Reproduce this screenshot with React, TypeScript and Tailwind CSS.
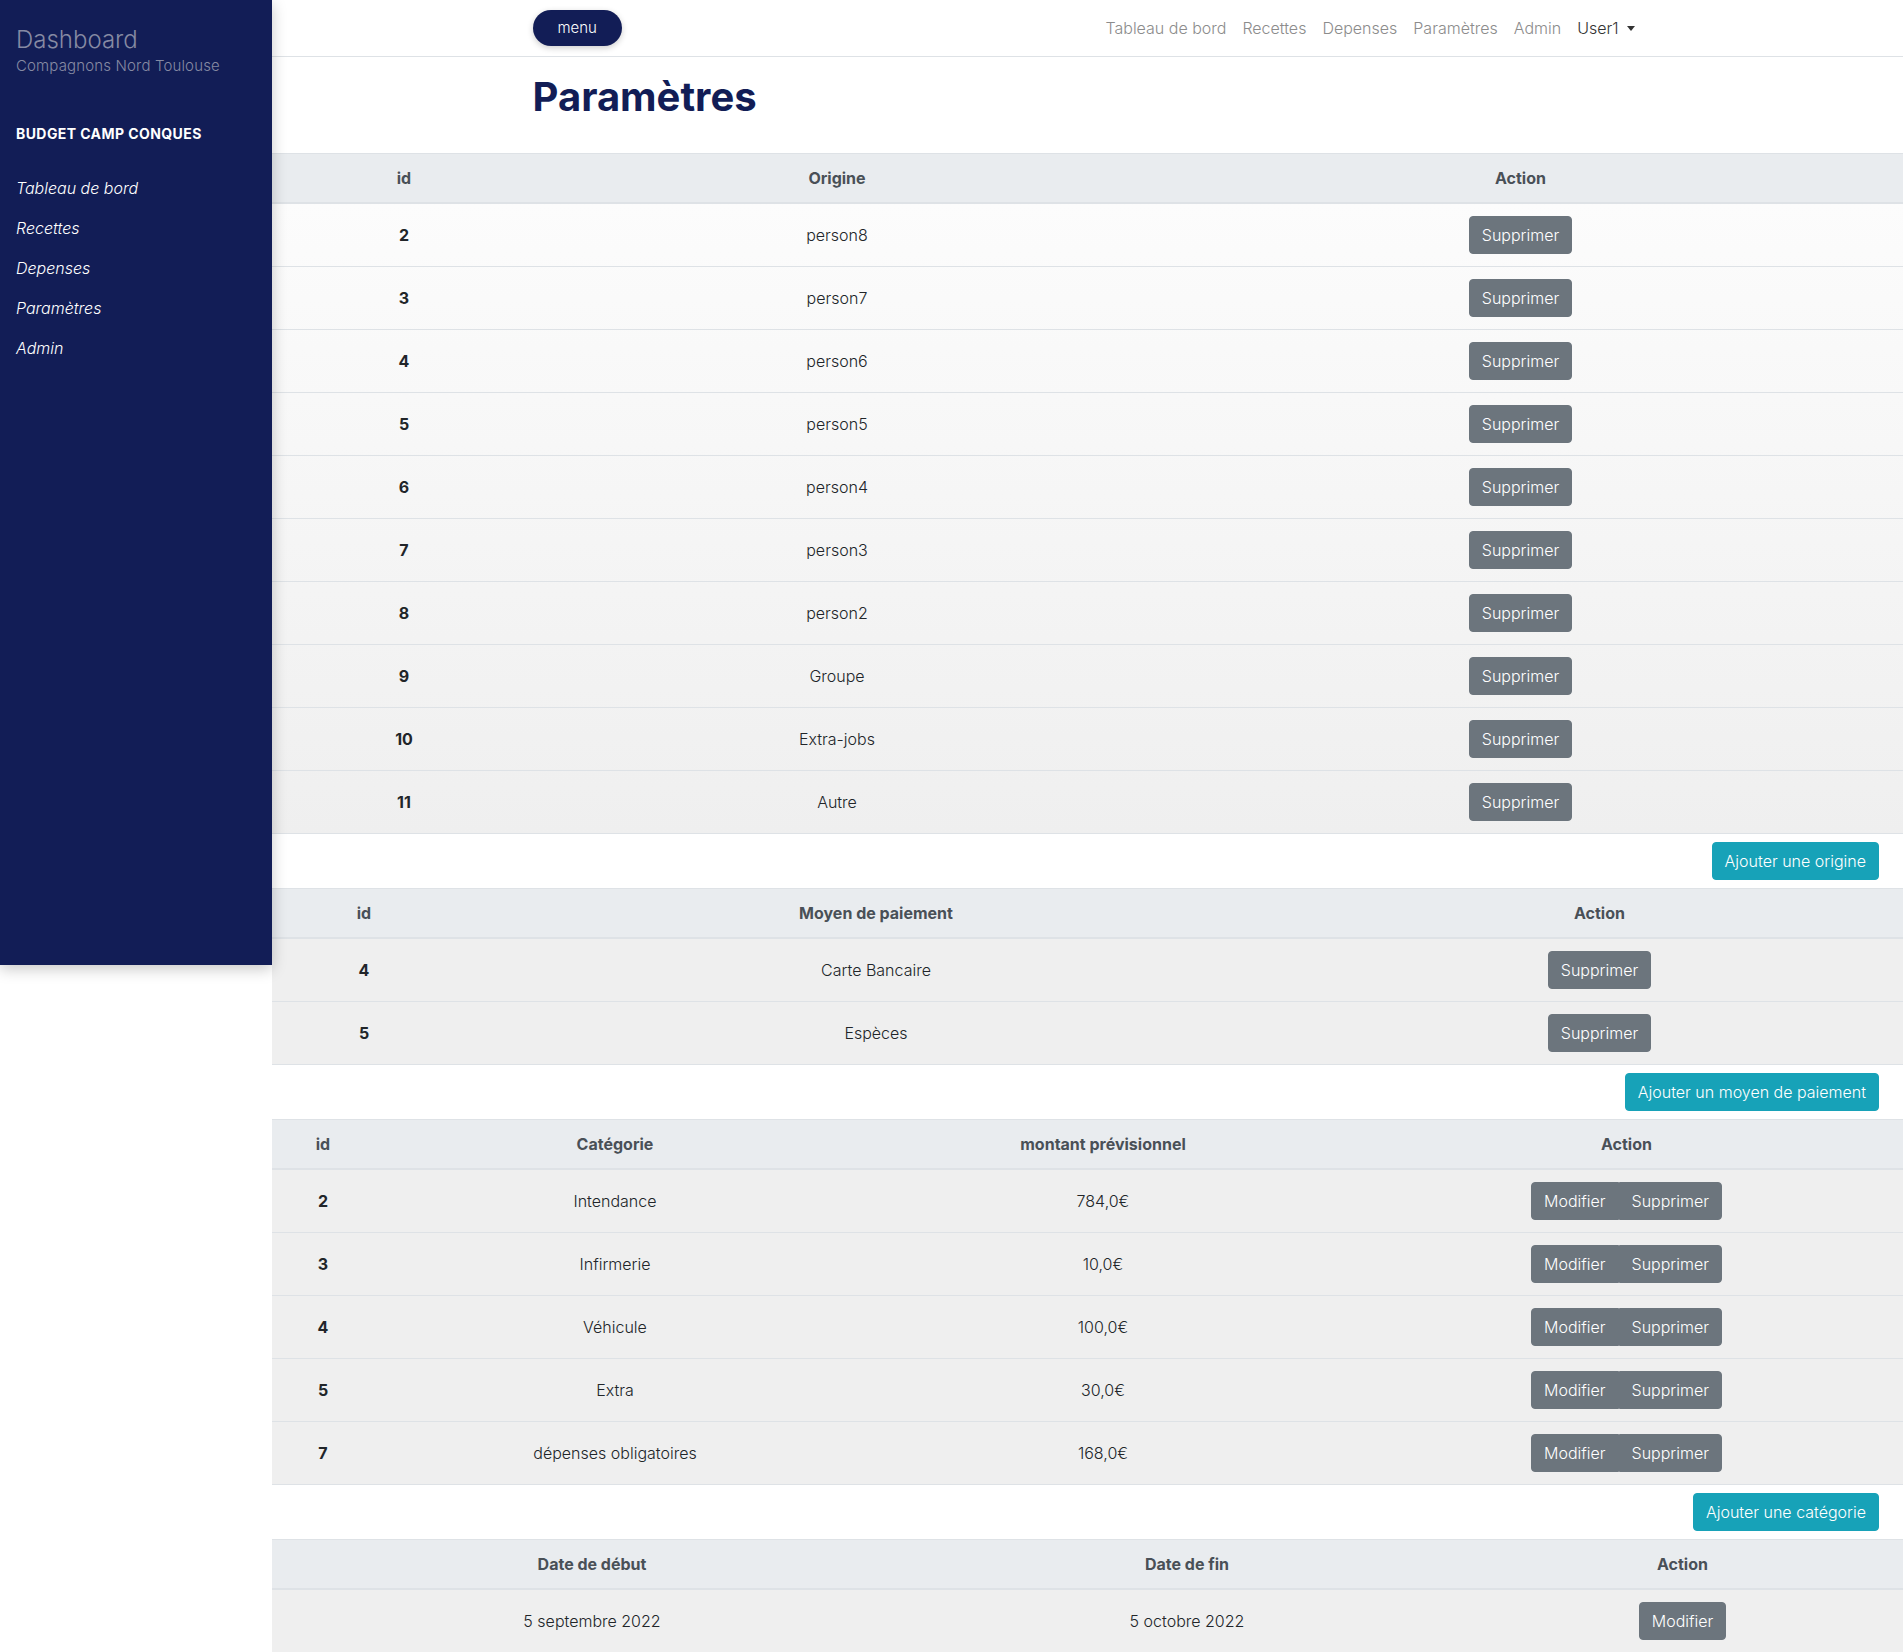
import React from 'react';

const origines = [
  { id: 2, name: 'person8' },
  { id: 3, name: 'person7' },
  { id: 4, name: 'person6' },
  { id: 5, name: 'person5' },
  { id: 6, name: 'person4' },
  { id: 7, name: 'person3' },
  { id: 8, name: 'person2' },
  { id: 9, name: 'Groupe' },
  { id: 10, name: 'Extra-jobs' },
  { id: 11, name: 'Autre' },
];

const moyens = [
  { id: 4, name: 'Carte Bancaire' },
  { id: 5, name: 'Espèces' },
];

const categories = [
  { id: 2, name: 'Intendance', montant: '784,0€' },
  { id: 3, name: 'Infirmerie', montant: '10,0€' },
  { id: 4, name: 'Véhicule', montant: '100,0€' },
  { id: 5, name: 'Extra', montant: '30,0€' },
  { id: 7, name: 'dépenses obligatoires', montant: '168,0€' },
];

const sideLinks = ['Tableau de bord', 'Recettes', 'Depenses', 'Paramètres', 'Admin'];

const btnGray =
  'inline-block px-3 py-[6px] text-base leading-6 font-light text-white bg-[#6c757d] border border-[#6c757d]';
const btnTeal =
  'inline-block px-3 py-[6px] text-base leading-6 font-light text-white bg-[#17a2b8] border border-[#17a2b8] rounded';

function Th({ children }: { children?: React.ReactNode }) {
  return (
    <th className="px-3 py-3 text-center align-middle font-bold text-[#495057] bg-[#e9ecef] border-t border-b-2 border-[#dee2e6] leading-6">
      {children}
    </th>
  );
}

function IdCell({ children }: { children: React.ReactNode }) {
  return <th className="px-3 py-3 text-center align-middle font-bold text-[#212529] leading-6">{children}</th>;
}

function Td({ children }: { children: React.ReactNode }) {
  return <td className="px-3 py-3 text-center align-middle font-light text-[#212529] leading-6">{children}</td>;
}

function AddRow({ label }: { label: string }) {
  return (
    <div className="flex justify-end py-2 pr-6 bg-white">
      <button className={btnTeal}>{label}</button>
    </div>
  );
}

export default function App() {
  return (
    <div className="flex min-h-screen bg-white text-[#212529] font-['Inter','Liberation_Sans',sans-serif]">
      <aside className="relative z-10 w-[272px] shrink-0 self-start h-[965px] bg-[#121d56] px-4 pt-[25px] shadow-[0_4px_14px_rgba(0,0,0,0.22)]">
        <div className="text-[24px] leading-[29px] font-light text-[#868aa3]">Dashboard</div>
        <div className="text-[15px] leading-6 font-light text-[#868aa3] tracking-[0.01em]">Compagnons Nord Toulouse</div>
        <div className="mt-[46px] text-[14px] leading-5 font-bold text-white tracking-[0.03em] uppercase">
          Budget Camp Conques
        </div>
        <ul className="mt-[24px]">
          {sideLinks.map((l) => (
            <li key={l} className="py-2 text-base leading-6 italic font-light text-white">
              {l}
            </li>
          ))}
        </ul>
      </aside>

      <main className="flex-1 min-w-0">
        <nav className="h-[57px] border-b border-[#dee2e6] bg-white">
          <div className="max-w-[1140px] mx-auto px-[15px] h-full flex items-center justify-between">
            <button className="h-[36px] px-[25px] rounded-full bg-[#121d56] text-white text-[15px] font-light shadow-[0_2px_6px_rgba(0,0,0,0.2)]">
              menu
            </button>
            <div className="flex items-center text-base font-light">
              <span className="px-2 text-[#8c8c8c]">Tableau de bord</span>
              <span className="px-2 text-[#8c8c8c]">Recettes</span>
              <span className="px-2 text-[#8c8c8c]">Depenses</span>
              <span className="px-2 text-[#8c8c8c]">Paramètres</span>
              <span className="px-2 text-[#8c8c8c]">Admin</span>
              <span className="px-2 text-[#333] flex items-center">
                User1
                <span className="ml-2 inline-block w-0 h-0 border-t-[5px] border-t-[#333] border-x-[4px] border-x-transparent" />
              </span>
            </div>
          </div>
        </nav>

        <div className="max-w-[1140px] mx-auto px-[15px] pt-[16px] pb-[32px]">
          <h1 className="text-[40px] leading-[48px] font-bold text-[#121d56]">Paramètres</h1>
        </div>

        <table className="w-full table-fixed border-collapse">
          <colgroup>
            <col className="w-[264px]" />
            <col className="w-[602px]" />
            <col />
          </colgroup>
          <thead>
            <tr>
              <Th>id</Th>
              <Th>Origine</Th>
              <Th>Action</Th>
            </tr>
          </thead>
          <tbody className="bg-linear-to-b from-[#fcfcfc] to-[#efefef]">
            {origines.map((o) => (
              <tr key={o.id} className="border-b border-[#dee2e6]">
                <IdCell>{o.id}</IdCell>
                <Td>{o.name}</Td>
                <Td>
                  <button className={`${btnGray} rounded`}>Supprimer</button>
                </Td>
              </tr>
            ))}
          </tbody>
        </table>
        <AddRow label="Ajouter une origine" />

        <table className="w-full table-fixed border-collapse">
          <colgroup>
            <col className="w-[184px]" />
            <col className="w-[840px]" />
            <col />
          </colgroup>
          <thead>
            <tr>
              <Th>id</Th>
              <Th>Moyen de paiement</Th>
              <Th>Action</Th>
            </tr>
          </thead>
          <tbody className="bg-[#efefef]">
            {moyens.map((m) => (
              <tr key={m.id} className="border-b border-[#dee2e6]">
                <IdCell>{m.id}</IdCell>
                <Td>{m.name}</Td>
                <Td>
                  <button className={`${btnGray} rounded`}>Supprimer</button>
                </Td>
              </tr>
            ))}
          </tbody>
        </table>
        <AddRow label="Ajouter un moyen de paiement" />

        <table className="w-full table-fixed border-collapse">
          <colgroup>
            <col className="w-[102px]" />
            <col className="w-[482px]" />
            <col className="w-[494px]" />
            <col />
          </colgroup>
          <thead>
            <tr>
              <Th>id</Th>
              <Th>Catégorie</Th>
              <Th>montant prévisionnel</Th>
              <Th>Action</Th>
            </tr>
          </thead>
          <tbody className="bg-[#efefef]">
            {categories.map((c) => (
              <tr key={c.id} className="border-b border-[#dee2e6]">
                <IdCell>{c.id}</IdCell>
                <Td>{c.name}</Td>
                <Td>{c.montant}</Td>
                <Td>
                  <div className="inline-flex">
                    <button className={`${btnGray} rounded-l`}>Modifier</button>
                    <button className={`${btnGray} rounded-r`}>Supprimer</button>
                  </div>
                </Td>
              </tr>
            ))}
          </tbody>
        </table>
        <AddRow label="Ajouter une catégorie" />

        <table className="w-full table-fixed border-collapse">
          <colgroup>
            <col className="w-[640px]" />
            <col className="w-[550px]" />
            <col />
          </colgroup>
          <thead>
            <tr>
              <Th>Date de début</Th>
              <Th>Date de fin</Th>
              <Th>Action</Th>
            </tr>
          </thead>
          <tbody className="bg-[#efefef]">
            <tr className="border-b border-[#dee2e6]">
              <Td>5 septembre 2022</Td>
              <Td>5 octobre 2022</Td>
              <Td>
                <button className={`${btnGray} rounded`}>Modifier</button>
              </Td>
            </tr>
          </tbody>
        </table>
      </main>
    </div>
  );
}
